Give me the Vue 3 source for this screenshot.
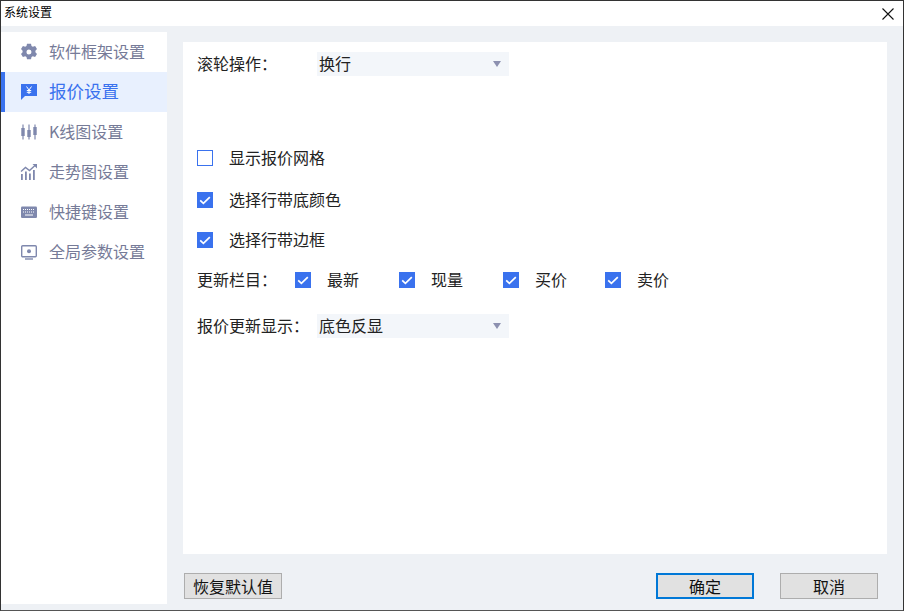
<template>
  <div class="window">
    <div class="titlebar">
      <span class="title">系统设置</span>
      <svg class="close" width="12" height="12" viewBox="0 0 12 12">
        <path d="M0.500 0.500 L11.500 11.500 M11.500 0.500 L0.500 11.500" stroke="#111" stroke-width="1.100" fill="none" />
      </svg>
    </div>
    <div class="body">
      <aside class="sidebar">
        <div v-for="item in menu" :key="item.id" class="menu-item" :class="{ active: item.id === 'quote' }">
          <svg class="menu-icon" width="18" height="18" viewBox="0 0 18 18">
            <template v-if="item.id === 'frame'">
              <path fill="#7f88ad" fill-rule="evenodd" d="M7 .8h4l.5 2.200 1.300.7 2.300-.7 1.900 3.100-1.600 1.700v1.400l1.600 1.700-1.900 3.100-2.300-.7-1.300.7-.5 2.200H7l-.5-2.200-1.300-.7-2.300.7-1.900-3.100 1.600-1.700V7.800L1 6.100l1.900-3.100 2.300.7 1.300-.7zM9 6.500a2.500 2.500 0 1 0 0 5 2.500 2.500 0 0 0 0-5z" />
            </template>
            <template v-else-if="item.id === 'quote'">
              <path fill="#3a72ee" d="M1 1h16v12H5l-4 4z" />
              <path d="M6.500 3.500 9 7l2.500-3.500M9 7v4M6.800 7.500h4.400M6.800 9.300h4.400" stroke="#fff" stroke-width="1" fill="none" />
            </template>
            <template v-else-if="item.id === 'kline'">
              <path stroke="#7f88ad" stroke-width="1.200" fill="none" d="M3 1.500v15M9 1.500v15M15 1.500v15" />
              <path fill="#7f88ad" d="M1.300 5h3.400v8H1.300zM7.300 7h3.400v7H7.300zM13.300 4h3.400v8h-3.400z" />
            </template>
            <template v-else-if="item.id === 'trend'">
              <path fill="#7f88ad" d="M1 11h1.800v6H1zM5 8.500h1.800V17H5zM9 10.500h1.800V17H9zM13 7h1.800v10H13z" />
              <path stroke="#7f88ad" stroke-width="1.400" fill="none" d="M1 8.500l4.500-4 4 3L15 2.500" />
              <path fill="#7f88ad" d="M12.500 1H17v4.500z" />
            </template>
            <template v-else-if="item.id === 'keys'">
              <path fill="#7f88ad" d="M2 3.500h14a1.500 1.500 0 0 1 1 1v9.500a1.500 1.500 0 0 1-1 1H2a1.500 1.500 0 0 1-1-1V4.500a1.500 1.500 0 0 1 1-1z" />
              <path stroke="#fff" stroke-width="1" stroke-dasharray="1 1" fill="none" d="M3 6.500h12M3 9h12" />
              <path stroke="#fff" stroke-width="1" fill="none" d="M5 12h8" />
            </template>
            <template v-else>
              <rect x="1.700" y="2.700" width="14.600" height="11" rx="1" fill="none" stroke="#7f88ad" stroke-width="1.400" />
              <circle cx="9" cy="8.200" r="2" fill="#7f88ad" />
              <path stroke="#7f88ad" stroke-width="1.400" d="M5 16h8" />
            </template>
          </svg>
          <span class="menu-label">{{ item.label }}</span>
        </div>
      </aside>
      <div class="content">
        <main class="panel">
          <div class="row select-row">
            <span class="field-label">滚轮操作：</span>
            <div class="select">
              <span class="text">换行</span>
              <i class="arrow"></i>
            </div>
          </div>
          <div class="checks">
            <label v-for="c in options" :key="c.label" class="check">
              <span class="box" :class="{ on: c.on }">
                <svg v-if="c.on" width="16" height="16" viewBox="0 0 16 16">
                  <path d="M3.200 8.400 6.400 11.400 12.800 5.200" stroke="#fff" stroke-width="1.700" fill="none" />
                </svg>
              </span>
              <span class="text">{{ c.label }}</span>
            </label>
          </div>
          <div class="row columns">
            <span class="field-label cols-label">更新栏目：</span>
            <label v-for="c in cols" :key="c.label" class="check col" :style="{ width: c.width + 'px' }">
              <span class="box on">
                <svg width="16" height="16" viewBox="0 0 16 16">
                  <path d="M3.200 8.400 6.400 11.400 12.800 5.200" stroke="#fff" stroke-width="1.700" fill="none" />
                </svg>
              </span>
              <span class="text">{{ c.label }}</span>
            </label>
          </div>
          <div class="row select-row second">
            <span class="field-label">报价更新显示：</span>
            <div class="select">
              <span class="text">底色反显</span>
              <i class="arrow"></i>
            </div>
          </div>
        </main>
        <footer class="footer">
          <button class="btn">恢复默认值</button>
          <div class="right-btns">
            <button class="btn primary">确定</button>
            <button class="btn">取消</button>
          </div>
        </footer>
      </div>
    </div>
  </div>
</template>

<script setup>
const menu = [
  { id: 'frame', label: '软件框架设置' },
  { id: 'quote', label: '报价设置' },
  { id: 'kline', label: 'K线图设置' },
  { id: 'trend', label: '走势图设置' },
  { id: 'keys', label: '快捷键设置' },
  { id: 'global', label: '全局参数设置' }
]

const options = [
  { label: '显示报价网格', on: false },
  { label: '选择行带底颜色', on: true },
  { label: '选择行带边框', on: true }
]

const cols = [
  { label: '最新', width: 104 },
  { label: '现量', width: 104 },
  { label: '买价', width: 102 },
  { label: '卖价', width: 80 }
]
</script>

<style>
html, body {
  margin: 0;
  background: #fff;
}
</style>

<style scoped>
.window {
  width: 904px;
  height: 611px;
  box-sizing: border-box;
  border: 1px solid #333;
  border-bottom-color: #555;
  display: flex;
  flex-direction: column;
  background: #eef1f5;
  font-family: "Noto Sans CJK SC", "Liberation Sans", sans-serif;
  font-size: 16px;
  line-height: 22px;
  color: #222;
  overflow: hidden;
}

.titlebar {
  height: 25px;
  background: #fff;
  display: flex;
  align-items: center;
  justify-content: space-between;
  padding: 0 9px 0 3px;
  flex-shrink: 0;
}

.title {
  font-size: 12px;
  color: #000;
  padding-bottom: 3px;
}

.body {
  flex: 1;
  display: flex;
  min-height: 0;
}

.sidebar {
  width: 166px;
  margin: 6px 0;
  background: #fff;
  flex-shrink: 0;
}

.menu-item {
  height: 40px;
  display: flex;
  align-items: center;
  padding-left: 19px;
  gap: 11px;
  box-sizing: border-box;
  color: #767b98;
  font-size: 16px;
}

.menu-label {
  padding-bottom: 2px;
}

.menu-item.active {
  background: #e8f0fe;
  border-left: 4px solid #3a72ee;
  padding-left: 15px;
  color: #3a72ee;
  font-size: 17.500px;
}

.menu-icon {
  flex-shrink: 0;
}

.content {
  flex: 1;
  display: flex;
  flex-direction: column;
  padding: 16px 16px 6px 16px;
  min-width: 0;
}

.panel {
  height: 512px;
  background: #fff;
  box-sizing: border-box;
  padding: 10px 14px;
  flex-shrink: 0;
}

.row {
  display: flex;
  align-items: center;
}

.field-label,
.text {
  padding-bottom: 2px;
}

.field-label {
  width: 120px;
  flex-shrink: 0;
}

.select {
  width: 192px;
  height: 24px;
  background: #f3f6fa;
  display: flex;
  align-items: center;
  justify-content: space-between;
  padding: 0 8px 0 2px;
  box-sizing: border-box;
}

.arrow {
  width: 0;
  height: 0;
  border-left: 4px solid transparent;
  border-right: 4px solid transparent;
  border-top: 6px solid #8c90b0;
}

.checks {
  margin-top: 62px;
  display: flex;
  flex-direction: column;
}

.check {
  display: flex;
  align-items: center;
  gap: 16px;
  height: 40px;
}

.checks .check:first-child {
  margin-bottom: 2px;
}

.box {
  width: 16px;
  height: 16px;
  box-sizing: border-box;
  border: 1px solid #3a72ee;
  background: #fff;
  flex-shrink: 0;
}

.box.on {
  background: #3a72ee;
}

.box svg {
  display: block;
  margin: -1px;
}

.columns {
  height: 40px;
}

.cols-label {
  width: 98px;
}

.col {
  flex-shrink: 0;
}

.second {
  margin-top: 14px;
}

.footer {
  flex: 1;
  display: flex;
  align-items: center;
  justify-content: space-between;
  padding: 13px 9px 0 1px;
}

.right-btns {
  display: flex;
  gap: 26px;
}

.btn {
  width: 98px;
  height: 26px;
  background: #e1e1e1;
  border: 1px solid #adadad;
  box-sizing: border-box;
  font: inherit;
  color: #111;
  padding: 0;
}

.btn.primary {
  border: 2px solid #0078d7;
}
</style>
